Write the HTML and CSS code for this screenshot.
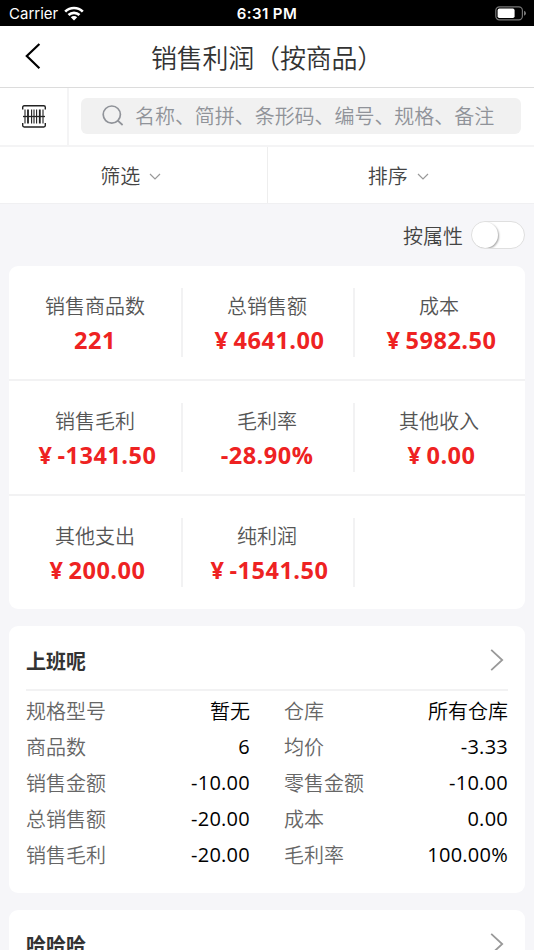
FILE: index.html
```html
<!DOCTYPE html>
<html lang="zh-CN">
<head>
  <meta charset="UTF-8" />
  <meta name="viewport" content="width=device-width, initial-scale=1.0" />
  <title>销售利润（按商品）</title>
  <link rel="stylesheet" href="styles.css">
</head>
<body>

  <div class="status-bar">
    <div class="carrier">
      <span>Carrier</span>
      <svg width="20" height="15" viewBox="0 0 20 15" fill="none" stroke="#fff" stroke-width="2.7">
        <path d="M1.2 5.6 A12.6 12.6 0 0 1 18.8 5.6" />
        <path d="M4.5 9 A8 8 0 0 1 15.5 9" />
        <path d="M10 14.6 L6.8 11.3 A4.6 4.6 0 0 1 13.2 11.3 Z" fill="#fff" stroke="none" />
      </svg>
    </div>
    <div class="time">6:31 PM</div>
    <div class="battery-wrap">
      <svg width="32" height="15" viewBox="0 0 32 15">
        <rect x="0.8" y="0.8" width="26.6" height="13" rx="3.6" fill="none" stroke="#777" stroke-width="1.2" />
        <rect x="2.6" y="2.6" width="17" height="9.4" rx="1.8" fill="#fff" />
        <path d="M29 4.8 Q31 5.6 31 7.3 Q31 9 29 9.8 Z" fill="#777" />
      </svg>
    </div>
  </div>

  <header class="header">
    <svg class="back" width="18" height="28" viewBox="0 0 18 28" fill="none" stroke="#000" stroke-width="2.2">
      <path d="M14.4 1 L1.8 13 L14.4 25.2" />
    </svg>
    <h1>销售利润（按商品）</h1>
  </header>

  <div class="search-row">
    <div class="scan">
      <svg width="24" height="23" viewBox="0 0 24 23" fill="none" stroke="#222">
        <path d="M0.7 4.6 V2.2 Q0.7 0.8 2.2 0.8 H21.8 Q23.3 0.8 23.3 2.2 V4.6" stroke-width="1.4" />
        <path d="M0.7 18 V20.6 Q0.7 22 2.2 22 H21.8 Q23.3 22 23.3 20.6 V18" stroke-width="1.4" />
        <path d="M3 4.5 V18.5 M9.6 4.5 V18.5 M12 4.5 V18.5 M14.6 4.5 V18.5 M21 4.5 V18.5" stroke-width="1.1" />
        <path d="M6 4.5 V18.5 M17.8 4.5 V18.5" stroke-width="1.8" />
        <path d="M1 11.5 H23" stroke-width="1.3" />
      </svg>
    </div>
    <div class="search">
      <svg width="22" height="22" viewBox="0 0 22 22" fill="none" stroke="#909399" stroke-width="1.7">
        <circle cx="9.8" cy="9.6" r="8.6" />
        <path d="M15.8 15.6 L20.6 20" />
      </svg>
      <span>名称、简拼、条形码、编号、规格、备注</span>
    </div>
  </div>

  <div class="filters">
    <div class="filter">筛选
      <svg width="12" height="8" viewBox="0 0 12 8" fill="none" stroke="#999" stroke-width="1.2"><path d="M1 2 L6 7 L11 2" /></svg>
    </div>
    <div class="filter">排序
      <svg width="12" height="8" viewBox="0 0 12 8" fill="none" stroke="#999" stroke-width="1.2"><path d="M1 2 L6 7 L11 2" /></svg>
    </div>
  </div>

  <div class="attr-row">
    <span>按属性</span>
    <div class="switch"><i></i></div>
  </div>

  <section class="summary">
    <div class="stat"><p>销售商品数</p><b>221</b></div>
    <div class="stat"><p>总销售额</p><b><span class="yen">¥</span>4641.00</b></div>
    <div class="stat"><p>成本</p><b><span class="yen">¥</span>5982.50</b></div>
    <div class="stat"><p>销售毛利</p><b><span class="yen">¥</span>-1341.50</b></div>
    <div class="stat"><p>毛利率</p><b>-28.90%</b></div>
    <div class="stat"><p>其他收入</p><b><span class="yen">¥</span>0.00</b></div>
    <div class="stat"><p>其他支出</p><b><span class="yen">¥</span>200.00</b></div>
    <div class="stat"><p>纯利润</p><b><span class="yen">¥</span>-1541.50</b></div>
    <div class="stat"></div>
  </section>

  <section class="card">
    <div class="card-head">
      <h2>上班呢</h2>
      <svg width="14" height="22" viewBox="0 0 14 22" fill="none" stroke="#999" stroke-width="1.8"><path d="M1.2 0.8 L12.2 11 L1.2 21.2" /></svg>
    </div>
    <div class="details">
      <div class="item"><span>规格型号</span><em>暂无</em></div>
      <div class="item"><span>仓库</span><em>所有仓库</em></div>
      <div class="item"><span>商品数</span><em class="num">6</em></div>
      <div class="item"><span>均价</span><em class="num">-3.33</em></div>
      <div class="item"><span>销售金额</span><em class="num">-10.00</em></div>
      <div class="item"><span>零售金额</span><em class="num">-10.00</em></div>
      <div class="item"><span>总销售额</span><em class="num">-20.00</em></div>
      <div class="item"><span>成本</span><em class="num">0.00</em></div>
      <div class="item"><span>销售毛利</span><em class="num">-20.00</em></div>
      <div class="item"><span>毛利率</span><em class="num">100.00%</em></div>
    </div>
  </section>

  <section class="card">
    <div class="card-head">
      <h2>哈哈哈</h2>
      <svg width="14" height="22" viewBox="0 0 14 22" fill="none" stroke="#999" stroke-width="1.8"><path d="M1.2 0.8 L12.2 11 L1.2 21.2" /></svg>
    </div>
  </section>

</body>
</html>
```
FILE: styles.css
```css
:root {
  --bg: #f6f6f9;
  --line: #f2f2f3;
  --red: #ee2222;
}

* {
  margin: 0;
  padding: 0;
  box-sizing: border-box;
}

body {
  height: 950px;
  overflow: hidden;
  background: var(--bg);
  color: #333;
  font-family: 'Open Sans', 'Noto Sans CJK SC', sans-serif;
  font-size: 20px;
  font-weight: 350;
}

svg {
  display: block;
  flex: none;
}

/* Status bar */
.status-bar {
  height: 26px;
  padding: 0 7px 0 9px;
  display: grid;
  grid-template-columns: 1fr auto 1fr;
  align-items: center;
  background: #000;
  color: #fff;
  font-family: Inter, sans-serif;
  font-size: 15px;
  font-weight: 400;
  line-height: 26px;
}

.carrier {
  display: flex;
  align-items: center;
  gap: 6px;
}

.carrier span {
  padding-top: 1px;
}

.time {
  font-weight: 600;
  padding: 1px 2px 0 0;
  letter-spacing: 0.4px;
}

.battery-wrap {
  display: flex;
  justify-content: flex-end;
}

/* Header */
.header {
  height: 62px;
  padding: 0 25px;
  display: grid;
  grid-template-columns: 18px 1fr 18px;
  align-items: center;
  background: #fff;
  border-bottom: 1px solid #dcdcdc;
}

.header h1 {
  font-size: 26px;
  font-weight: 350;
  line-height: 36px;
  text-align: center;
  white-space: nowrap;
  padding-top: 2px;
  letter-spacing: -0.2px;
}

/* Search */
.search-row {
  height: 59px;
  display: flex;
  align-items: center;
  background: #fff;
  border-bottom: 2px solid #f4f4f5;
}

.scan {
  width: 69px;
  height: 100%;
  display: flex;
  align-items: center;
  justify-content: center;
  border-right: 2px solid #f4f4f5;
}

.search {
  flex: 1;
  height: 36px;
  margin: 0 13px 2px 12px;
  padding-left: 21px;
  display: flex;
  align-items: center;
  gap: 11px;
  border-radius: 6px;
  background: #f1f1f1;
  color: #909399;
  line-height: 36px;
  white-space: nowrap;
}

.search span {
  padding-top: 2px;
  letter-spacing: -0.05px;
}

/* Filters */
.filters {
  height: 57px;
  display: flex;
  background: #fff;
  border-bottom: 1px solid #f0f0f2;
}

.filter {
  flex: 1;
  display: flex;
  align-items: center;
  justify-content: center;
  gap: 9px;
  padding: 1px 5px 0 0;
  color: #444;
}

.filter:first-child {
  border-right: 1px solid #eee;
}

.attr-row {
  height: 62px;
  padding-right: 9px;
  display: flex;
  align-items: center;
  justify-content: flex-end;
  gap: 8px;
  color: #444;
}

.switch {
  width: 54px;
  height: 28px;
  overflow: hidden;
  border: 1px solid #dfdfdf;
  border-radius: 14px;
  background: #fff;
}

.switch i {
  display: block;
  width: 26px;
  height: 26px;
  border-radius: 50%;
  background: #fff;
  box-shadow: 1px 1px 2px rgba(0, 0, 0, 0.35);
}

/* Summary */
.summary {
  margin: 0 9px 17px;
  display: grid;
  grid-template-columns: repeat(3, 1fr);
  grid-template-rows: 115px 115px 113px;
  border-radius: 9px;
  background: #fff;
}

.stat {
  display: flex;
  flex-direction: column;
  align-items: center;
  padding-top: 24px;
  border-bottom: 2px solid var(--line);
  color: #555;
  line-height: 34px;
}

/* short divider on the left of the 2nd and 3rd columns */
.stat:not(:nth-child(3n + 1)) {
  background: linear-gradient(var(--line), var(--line)) left 22px / 2px 69px no-repeat;
}

.stat:nth-child(n + 7) {
  border-bottom: none;
}

.stat b {
  color: var(--red);
  font-size: 23.5px;
  font-weight: 700;
  line-height: 32px;
  white-space: nowrap;
  letter-spacing: 0.5px;
}

.yen {
  display: inline-block;
  width: 24px;
  text-align: center;
}

/* Goods cards */
.card {
  height: 267px;
  margin: 0 9px 17px;
  padding: 0 17px;
  border-radius: 9px;
  background: #fff;
}

.card-head {
  height: 65px;
  display: flex;
  align-items: center;
  justify-content: space-between;
  padding: 5px 4px 0 0;
  border-bottom: 2px solid var(--line);
}

.card-head h2 {
  font-size: 20px;
  font-weight: 700;
}

.details {
  padding-top: 2px;
  display: grid;
  grid-template-columns: 1fr 1fr;
  column-gap: 34px;
}

.item {
  height: 35.8px;
  display: flex;
  align-items: center;
  justify-content: space-between;
  color: #666;
}

.item em {
  color: #000;
  font-style: normal;
}

.item .num {
  font-weight: 400;
  letter-spacing: 0.25px;
}
```
